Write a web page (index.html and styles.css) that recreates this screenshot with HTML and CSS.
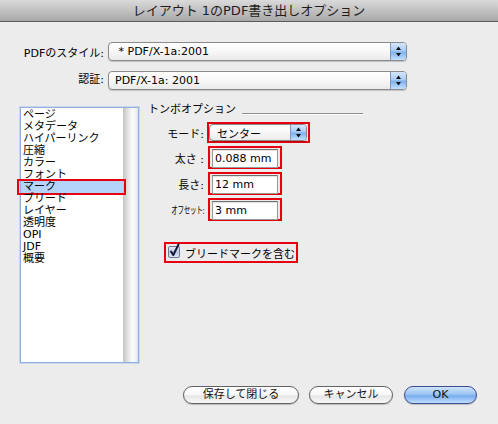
FILE: index.html
```html
<!DOCTYPE html>
<html lang="ja">
<head>
<meta charset="utf-8">
<title>PDF書き出しオプション</title>
<link rel="stylesheet" href="styles.css">
</head>
<body>
<div class="window">
  <div class="titlebar">レイアウト 1のPDF書き出しオプション</div>

  <div class="top">
    <div class="field-row">
      <span class="field-label">PDFのスタイル:</span>
      <div class="popup">
        <span class="popup-text">&nbsp;* PDF/X-1a:2001</span>
        <span class="stepper"><svg width="9" height="13" viewBox="0 0 9 13"><path d="M2 5 L4.5 1.5 L7 5 Z M2 8 L7 8 L4.5 11.5 Z" fill="#111"/></svg></span>
      </div>
    </div>
    <div class="field-row">
      <span class="field-label label-up">認証:</span>
      <div class="popup">
        <span class="popup-text">PDF/X-1a: 2001</span>
        <span class="stepper"><svg width="9" height="13" viewBox="0 0 9 13"><path d="M2 5 L4.5 1.5 L7 5 Z M2 8 L7 8 L4.5 11.5 Z" fill="#111"/></svg></span>
      </div>
    </div>
  </div>

  <div class="main">
    <div class="listbox">
      <ul class="list">
        <li>ページ</li>
        <li>メタデータ</li>
        <li>ハイパーリンク</li>
        <li>圧縮</li>
        <li>カラー</li>
        <li>フォント</li>
        <li class="selected">マーク</li>
        <li>ブリード</li>
        <li>レイヤー</li>
        <li>透明度</li>
        <li>OPI</li>
        <li>JDF</li>
        <li>概要</li>
      </ul>
      <div class="scroller"></div>
    </div>

    <div class="panel">
      <div class="group-head"><span class="group-title">トンボオプション</span><span class="rule"></span></div>
      <div class="form">
        <span class="flabel">モード:</span>
        <div class="mark mark-mode">
          <div class="popup popup-mode">
            <span class="popup-text">センター</span>
            <span class="stepper"><svg width="9" height="13" viewBox="0 0 9 13"><path d="M2 5 L4.5 1.5 L7 5 Z M2 8 L7 8 L4.5 11.5 Z" fill="#111"/></svg></span>
          </div>
        </div>

        <span class="flabel">太さ :</span>
        <div class="mark mark-input"><div class="input">0.088 mm</div></div>

        <span class="flabel">長さ:</span>
        <div class="mark mark-input"><div class="input">12 mm</div></div>

        <span class="flabel"><span class="condensed">オフセット:</span></span>
        <div class="mark mark-input"><div class="input">3 mm</div></div>
      </div>

      <div class="mark mark-check">
        <svg class="checkbox" width="14" height="16" viewBox="0 0 14 16">
          <defs>
            <linearGradient id="cb" x1="0" y1="0" x2="0" y2="1">
              <stop offset="0" stop-color="#e9eef7"/>
              <stop offset="0.5" stop-color="#bccbe3"/>
              <stop offset="1" stop-color="#dbe5f3"/>
            </linearGradient>
          </defs>
          <rect x="1.5" y="3.5" width="11" height="11" rx="1.5" fill="url(#cb)" stroke="#6c7a92"/>
          <path d="M4 8.5 L6.3 12 L11.5 1.5" fill="none" stroke="#15183a" stroke-width="2" stroke-linejoin="round" stroke-linecap="round"/>
        </svg>
        <span>ブリードマークを含む</span>
      </div>
    </div>
  </div>

  <div class="footer">
    <button class="btn btn-save">保存して閉じる</button>
    <button class="btn btn-cancel">キャンセル</button>
    <button class="btn btn-ok">OK</button>
  </div>
</div>
</body>
</html>
```

FILE: styles.css
```css
* { box-sizing: border-box; }

body {
  margin: 0;
  background: #ececec;
  font-family: "DejaVu Sans", "Noto Sans CJK JP", sans-serif;
  font-size: 11px;
  color: #000;
}

.window {
  width: 498px;
  height: 424px;
  overflow: hidden;
}

.titlebar {
  height: 22px;
  border-bottom: 1px solid #5b5b5b;
  background: linear-gradient(#dadada, #a8a8a8);
  text-align: center;
  font-size: 13px;
  line-height: 22px;
  color: #1e1e1e;
}

/* top selects */
.top {
  padding-top: 20px;
  display: flex;
  flex-direction: column;
  gap: 10px;
}

.field-row {
  display: grid;
  grid-template-columns: 104px 299px;
  column-gap: 4px;
  align-items: center;
  height: 19px;
}

.field-label {
  text-align: right;
  white-space: nowrap;
}

.label-up { margin-top: -6px; }

.popup {
  height: 19px;
  border: 1px solid #8a8a8a;
  border-radius: 4px;
  background: linear-gradient(#ffffff 0%, #f7f7f7 50%, #e9e9e9 100%);
  display: flex;
  align-items: stretch;
  box-shadow: 0 1px 1px rgba(0, 0, 0, 0.18);
  overflow: hidden;
}

.popup-text {
  flex: 1;
  display: flex;
  align-items: center;
  padding-left: 6px;
  white-space: nowrap;
}

.stepper {
  width: 16px;
  display: flex;
  align-items: center;
  justify-content: center;
  border-left: 1px solid #8194c6;
  background: linear-gradient(#d6e6fa 0%, #a8cbf4 45%, #7fb1ee 55%, #c4e0fc 100%);
}

/* main area */
.main {
  display: flex;
  margin-top: 13px;
  height: 260px;
}

.listbox {
  margin-top: 4px;
  margin-left: 20px;
  width: 119px;
  height: 256px;
  border: 1px solid #8fb0e4;
  box-shadow: 0 0 0 1px rgba(143, 176, 228, 0.35);
  background: #fff;
  display: flex;
}

.list {
  flex: 1;
  margin: 0;
  padding: 1px 0 0;
  list-style: none;
  line-height: 12px;
}

.list li {
  position: relative;
  height: 12px;
  padding-left: 2px;
  white-space: nowrap;
}

.list li span,
.list li {
  text-indent: 0;
}

.list li.selected {
  background: #b5d4fb;
}

.list li.selected::after {
  content: "";
  position: absolute;
  left: -4px;
  right: -3px;
  top: -2px;
  bottom: -2px;
  border: 2px solid #e6000f;
}

.scroller {
  width: 15px;
  background: linear-gradient(to right, #c3c3c3, #e4e4e4 35%, #fbfbfb 60%, #f2f2f2 85%, #e0e0e0);
}

/* right panel */
.panel {
  margin-left: 9px;
  display: flex;
  flex-direction: column;
}

.group-head {
  display: flex;
  height: 14px;
  line-height: 14px;
}

.group-title { white-space: nowrap; }

.rule {
  width: 121px;
  margin-left: 6px;
  margin-top: 10px;
  height: 2px;
  border-top: 1px solid #8f8f8f;
  border-bottom: 1px solid #fafafa;
}

.form {
  margin-top: 5px;
  display: grid;
  grid-template-columns: 56px auto;
  column-gap: 3px;
  row-gap: 3px;
  align-items: center;
  justify-items: start;
}

.flabel {
  justify-self: end;
  white-space: nowrap;
}

.condensed {
  display: inline-block;
  font-size: 10px;
  transform: scaleX(0.66);
  transform-origin: right center;
  letter-spacing: -0.5px;
}

.mark {
  border: 2px solid #e6000f;
}

.mark-mode {
  width: 103px;
  height: 21px;
  padding: 0 1px 0 0;
}

.popup-mode {
  height: 17px;
}

.popup-mode .popup-text { padding-left: 7px; }

.mark-input {
  margin-left: 1px;
  width: 74px;
  height: 23px;
  padding: 1px 2px;
}

.input {
  height: 19px;
  border: 1px solid #9a9a9a;
  border-top-color: #6f6f6f;
  background: #fff;
  box-shadow: inset 0 1px 1px rgba(0, 0, 0, 0.12);
  padding-left: 2px;
  line-height: 17px;
  white-space: nowrap;
}

.mark-check {
  margin-top: 21px;
  margin-left: 16px;
  align-self: flex-start;
  height: 21px;
  display: flex;
  align-items: center;
  gap: 4px;
  padding: 0 1px 0 1px;
  white-space: nowrap;
}

.checkbox { margin-top: -3px; }

/* footer */
.footer {
  margin-top: 23px;
  display: flex;
  justify-content: flex-end;
  padding-right: 21px;
  gap: 10px;
}

.btn {
  height: 18px;
  padding: 0;
  border: 1px solid #626262;
  border-radius: 9px;
  background: linear-gradient(#ffffff 0%, #f6f6f6 50%, #e6e6e6 55%, #f8f8f8 100%);
  box-shadow: 0 1px 1px rgba(0, 0, 0, 0.2);
  font-family: "DejaVu Sans", "Noto Sans CJK JP", sans-serif;
  font-size: 11px;
  line-height: 16px;
  color: #111;
}

.btn-save { width: 116px; }
.btn-cancel { width: 84px; }

.btn-ok {
  width: 73px;
  margin-left: 1px;
  border-color: #3c4c92;
  background: linear-gradient(#cfe3fa 0%, #9cc5f3 45%, #76acee 55%, #bfe0fd 100%);
}
```
